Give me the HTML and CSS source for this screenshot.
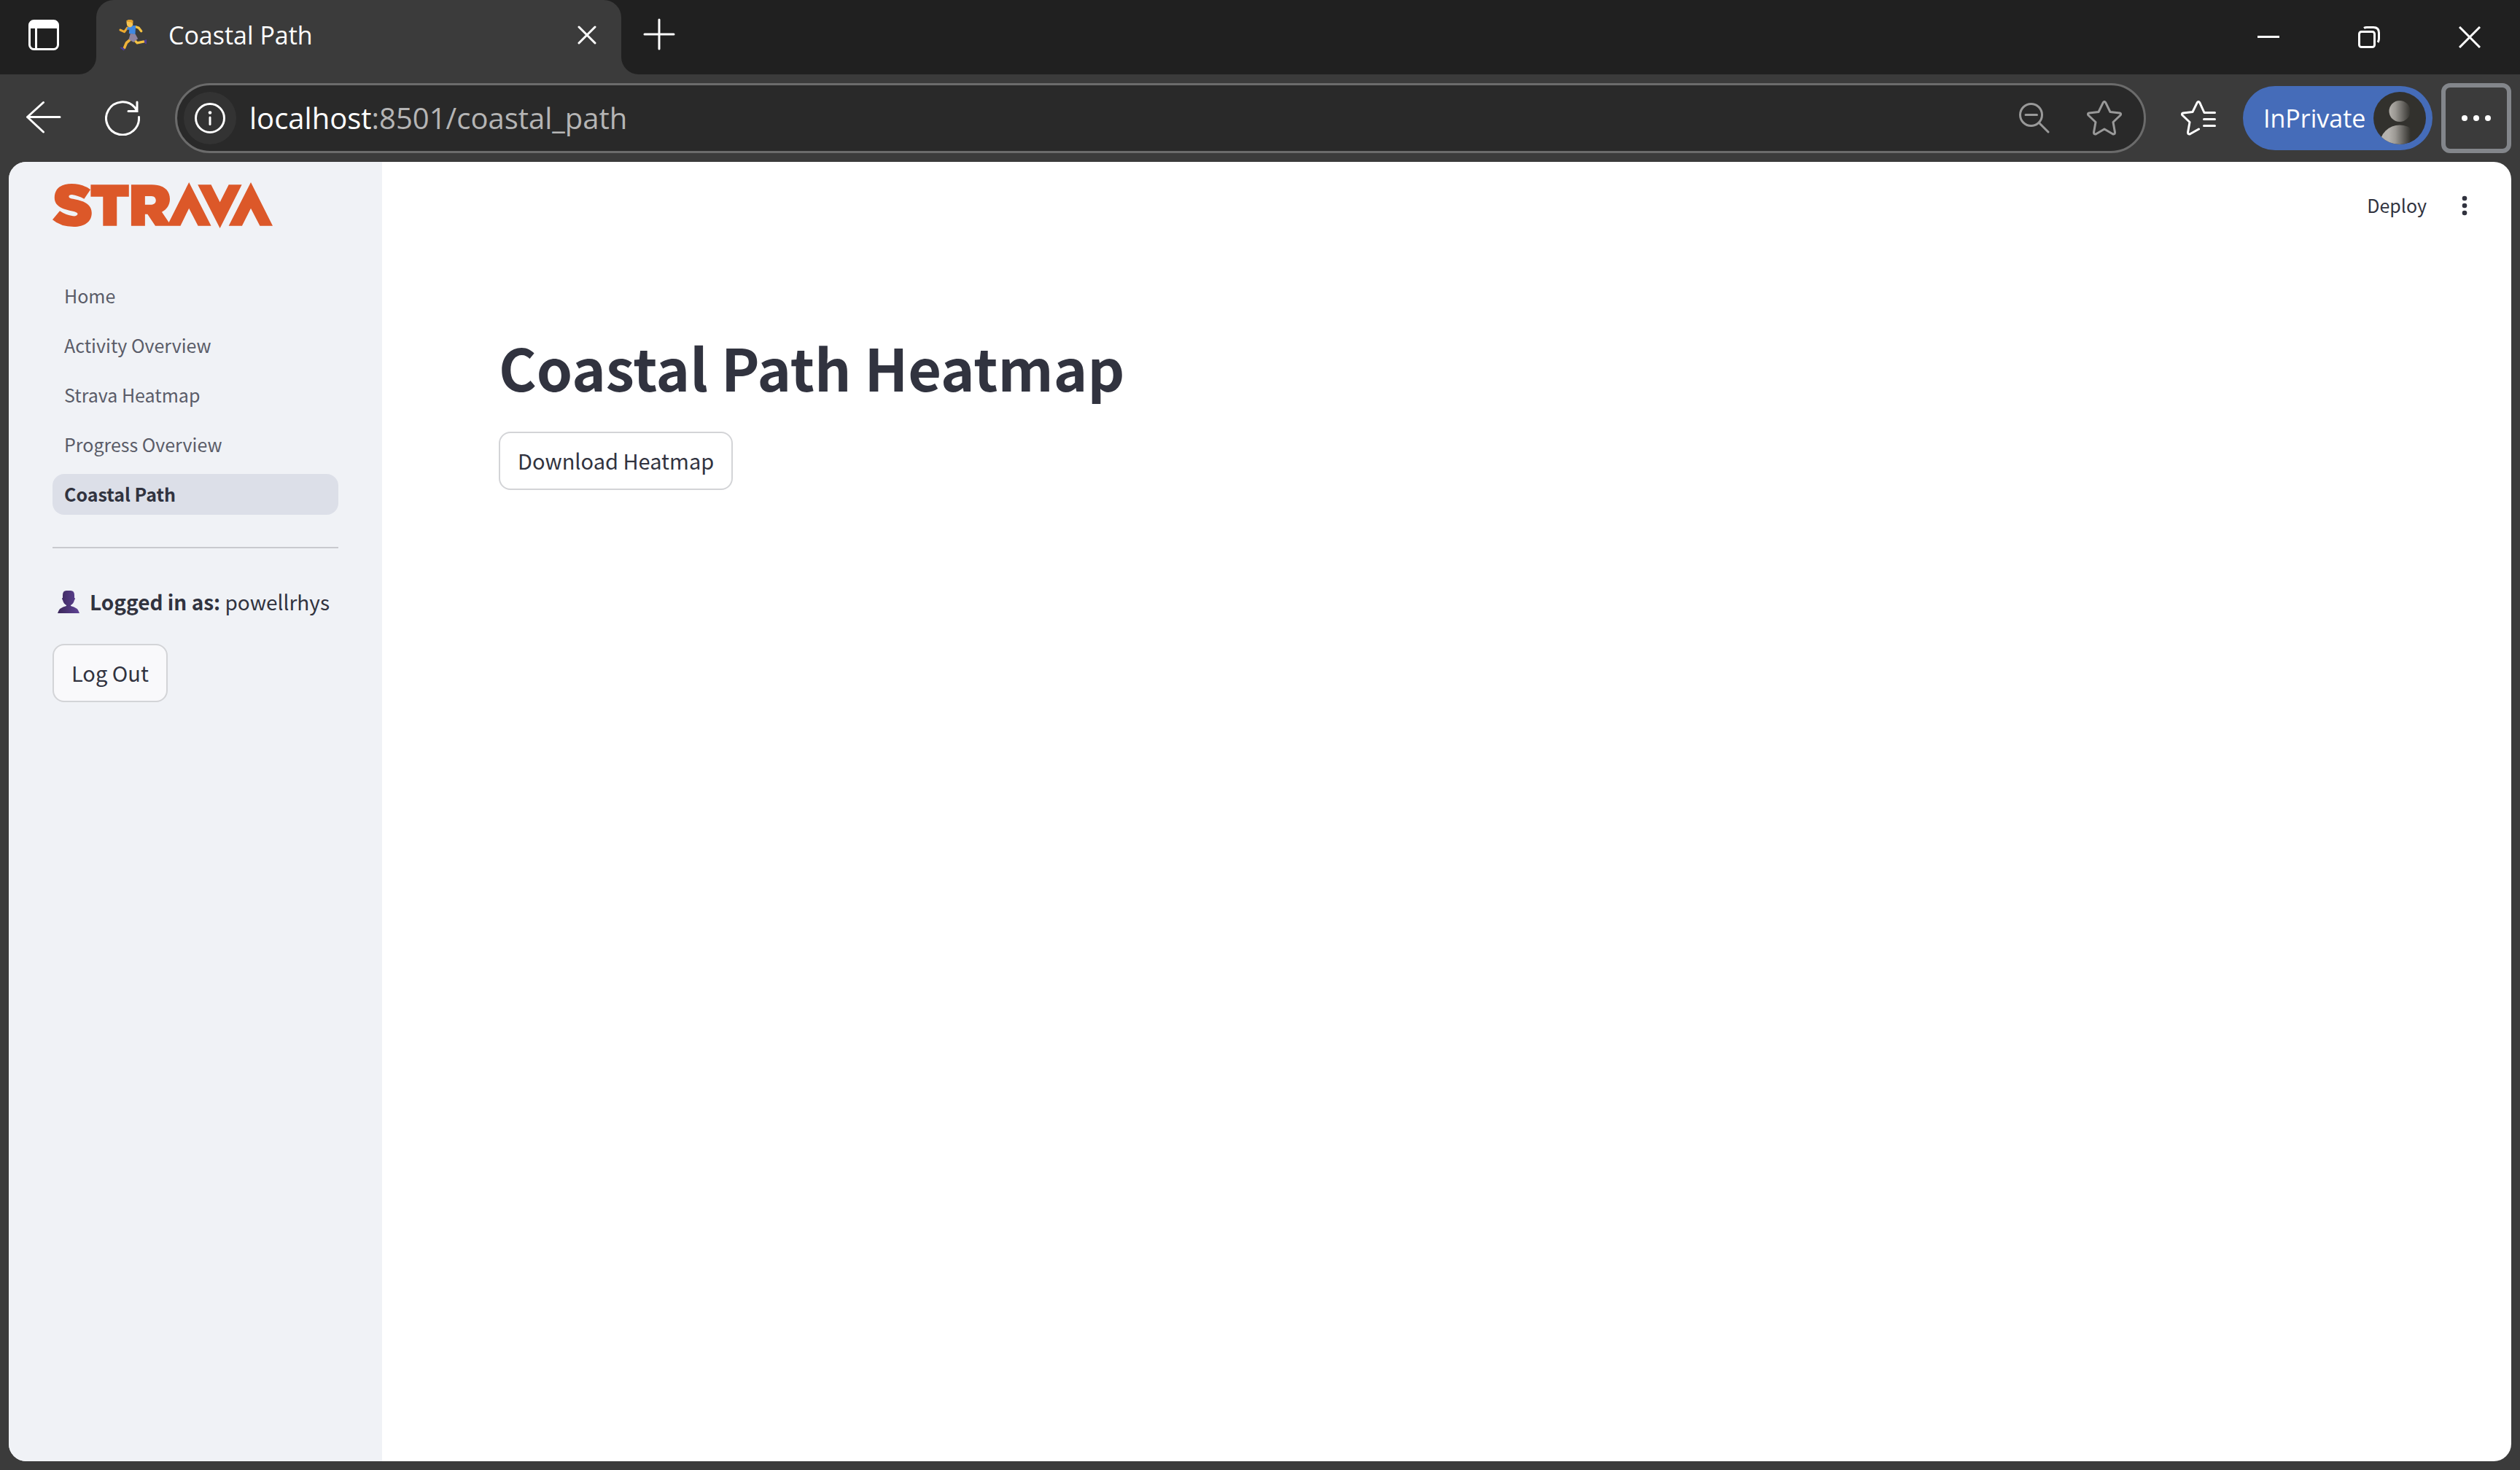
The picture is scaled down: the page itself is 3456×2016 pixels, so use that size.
FILE: index.html
```html
<!DOCTYPE html>
<html lang="en">
<head>
<meta charset="utf-8">
<title>Coastal Path</title>
<link rel="stylesheet" href="styles.css">
</head>
<body>
<header class="browser">
  <div class="tabstrip">
    <div class="strip-start">
      <button class="icon-button" aria-label="Tab actions">
        <svg width="42" height="42" viewBox="0 0 42 42"><rect x="1.5" y="1.5" width="39" height="39" rx="6" fill="none" stroke="#fff" stroke-width="3"/><path d="M1 12V7a6 6 0 0 1 6-6h28a6 6 0 0 1 6 6v5z" fill="#fff"/><path d="M10.500 12v28" stroke="#fff" stroke-width="3"/></svg>
      </button>
    </div>
    <div class="tab-slot">
      <div class="tab">
        <svg width="39" height="44" viewBox="488 76 118 132" stroke-linecap="round" stroke-linejoin="round">
          <path d="M523 112 511 129 494 121" fill="none" stroke="#eca92f" stroke-width="9"/>
          <path d="M558 108 570 112 581 126" fill="none" stroke="#f5c242" stroke-width="10"/>
          <path d="M534 162 520 174 511 195" fill="none" stroke="#f0b23a" stroke-width="11"/>
          <path d="M552 162 564 175 593 169" fill="none" stroke="#f5c242" stroke-width="10"/>
          <path d="M492 194 503 193 514 201 508 207zM592 164 603 160 603 179 597 178z" fill="#4b3c94"/>
          <path d="M524 110Q538 100 558 103L556 140 530 136 531 120 520 120z" fill="#4088e2"/>
          <path d="M536 136 557 139 567 157 549 172 529 160z" fill="#8e84a0"/>
          <path d="M520 83Q532 75 546 82L546 101Q538 114 527 108 520 103 520 92z" fill="#f6c453"/>
          <path d="M519 83Q532 74 547 82L546 96 539 89 522 87z" fill="#e3a12c"/>
        </svg>
        <span class="tab-title">Coastal Path</span>
        <button class="icon-button" aria-label="Close tab">
          <svg width="26" height="26" viewBox="0 0 26 26"><path d="M2 2 24 24M24 2 2 24" stroke="#fff" stroke-width="3" stroke-linecap="round"/></svg>
        </button>
      </div>
    </div>
    <div class="strip-end">
      <button class="icon-button" aria-label="New tab">
        <svg width="44" height="44" viewBox="0 0 44 44"><path d="M22 2V42M2 22H42" stroke="#fff" stroke-width="3" stroke-linecap="round"/></svg>
      </button>
      <div class="window-controls">
        <button class="icon-button" aria-label="Minimize"><svg width="30" height="30" viewBox="0 0 30 30"><path d="M0 14.500H30" stroke="#fff" stroke-width="3"/></svg></button>
        <button class="icon-button" aria-label="Restore"><svg width="30" height="30" viewBox="0 0 30 30" fill="none" stroke="#fff" stroke-width="3"><rect x="1.500" y="7.500" width="21" height="21" rx="3"/><path d="M8 2.500Q9.500 1.500 12 1.500H21Q28.500 1.500 28.500 9V17Q28.500 20 27 22"/></svg></button>
        <button class="icon-button" aria-label="Close"><svg width="30" height="30" viewBox="0 0 30 30"><path d="M1 1 29 29M29 1 1 29" stroke="#fff" stroke-width="3"/></svg></button>
      </div>
    </div>
  </div>
  <div class="toolbar">
    <div class="nav-buttons">
      <button class="icon-button" aria-label="Back"><svg width="48" height="48" viewBox="0 0 48 48" fill="none" stroke="#fff" stroke-width="3" stroke-linecap="round" stroke-linejoin="round"><path d="M23.500 2.500 1.500 22.500 23.500 43M2 22.500H46"/></svg></button>
      <button class="icon-button" aria-label="Refresh"><svg width="48" height="48" viewBox="0 0 48 48" fill="none" stroke="#fff" stroke-width="3" stroke-linecap="round"><path d="M46.500 22.500A22.500 22.500 0 1 1 41 9.500L44 14.500M44 2V14.500H32"/></svg></button>
    </div>
    <div class="address">
      <button class="site-info" aria-label="View site information"><svg width="42" height="42" viewBox="0 0 42 42"><circle cx="21" cy="21" r="19.500" fill="none" stroke="#fff" stroke-width="3"/><circle cx="21" cy="13.500" r="2.300" fill="#fff"/><path d="M21 20V29.500" stroke="#fff" stroke-width="3" stroke-linecap="round"/></svg></button>
      <div class="url"><span class="host">localhost</span>:8501/coastal_path</div>
      <div class="address-actions">
        <button class="icon-button" aria-label="Zoom"><svg width="42" height="42" viewBox="0 0 42 42" fill="none" stroke="#999" stroke-width="3" stroke-linecap="round"><circle cx="16.500" cy="16.500" r="15"/><path d="M9 16.500H24.500M28 28 40 40"/></svg></button>
        <button class="icon-button" aria-label="Add to favorites"><svg width="48" height="48" viewBox="0 0 48 48" fill="none" stroke="#999" stroke-width="3" stroke-linejoin="round"><path d="M22.200 2.800Q24 0 25.800 2.800L32 15.500 45 17Q48 18 45.500 20.500L36 29.500 38.500 43.500Q38.500 47 35 45.500L24 39 13 45.500Q9.500 47 9.500 43.500L12 29.500 2.500 20.500Q0 18 3 17L16 15.500Z"/></svg></button>
      </div>
    </div>
    <button class="icon-button" aria-label="Favorites"><svg width="48" height="48" viewBox="0 0 48 48" fill="none" stroke="#fff" stroke-width="3" stroke-linecap="round" stroke-linejoin="round"><path d="M46.500 16.500H32L25.800 2.800Q24 0 22.200 2.800L16 15.500 3 17Q0 18 2.500 20.500L12 29.500 9.500 43.500Q9.500 47 13 45.500L24.500 39M31.500 25.500H46.500M31.500 34.500H46.500"/></svg></button>
    <button class="profile">InPrivate
      <svg width="72" height="72" viewBox="0 0 72 72"><defs><linearGradient id="fade" gradientUnits="userSpaceOnUse" x1="21" y1="0" x2="51" y2="0"><stop offset="0" stop-color="#b5b2ad"/><stop offset=".3" stop-color="#9c9994"/><stop offset="1" stop-color="#32312d"/></linearGradient><clipPath id="round"><circle cx="36" cy="36" r="36"/></clipPath></defs><g clip-path="url(#round)"><path d="M0 0H72V72H0z" fill="#32312d"/><circle cx="36" cy="26.500" r="14.500" fill="url(#fade)"/><circle cx="36" cy="73" r="27.500" fill="url(#fade)"/></g></svg>
    </button>
    <button class="more" aria-label="Settings and more"><svg width="40" height="8" viewBox="0 0 40 8" fill="#fff"><circle cx="4" cy="4" r="4"/><circle cx="20" cy="4" r="4"/><circle cx="36" cy="4" r="4"/></svg></button>
  </div>
</header>
<div class="app">
  <aside class="sidebar">
    <svg class="logo" role="img" aria-label="Strava" width="302" height="63" viewBox="210 121 876 189" preserveAspectRatio="none" fill="#dc5829"><path d="M361 151 336 189Q310 175 288 172C273 171 271 183 282 187 305 194 366 197 366 247 366 284 337 304 295 304Q242 304 210 275L239 239Q263 256 291 260C306 262 315 252 307 246 288 235 218 236 218 185 218 145 246 127 286 127Q330 127 361 151zM362 131H514V180H466V300H411V180H362zM523 131H605C650 131 677 152 677 190 677 214 664 234 645 243L673 286 753 121 841 300H789L753 228 719 300H619L588 252H578V300H523zM578 178V213H604C627 213 627 178 604 178zM788 131H841L876 203 911 131H963L876 310zM999 121 1086 300H1035L999 228 964 300H911z"/></svg>
    <nav class="menu">
      <a href="#">Home</a>
      <a href="#">Activity Overview</a>
      <a href="#">Strava Heatmap</a>
      <a href="#">Progress Overview</a>
      <a href="#" class="active" aria-current="page">Coastal Path</a>
    </nav>
    <hr class="divider">
    <p class="user"><svg width="30" height="31" viewBox="0 0 30 31"><defs><linearGradient id="purple"><stop offset="0" stop-color="#3b2759"/><stop offset="1" stop-color="#5f4496"/></linearGradient></defs><path d="M7 10V6Q7 0 12 0H18Q23 0 23 6V10Q25 10 23 13 22 18 18 20V21Q28 23 30 31H0Q2 23 12 21V20Q8 18 7 13 5 10 7 10z" fill="url(#purple)"/></svg><span><strong>Logged in as:</strong> powellrhys</span></p>
    <button class="button">Log Out</button>
  </aside>
  <main class="main">
    <div class="app-bar">
      <button class="deploy">Deploy</button>
      <button class="icon-button" aria-label="Main menu"><svg width="8" height="28" viewBox="0 0 8 28" fill="#31333f"><circle cx="4" cy="4" r="3.300"/><circle cx="4" cy="14" r="3.300"/><circle cx="4" cy="24" r="3.300"/></svg></button>
    </div>
    <section class="content">
      <h1>Coastal Path Heatmap</h1>
      <button class="button">Download Heatmap</button>
    </section>
  </main>
</div>
</body>
</html>
```
FILE: styles.css
```css
* { box-sizing: border-box; }

body {
  margin: 0;
  min-height: 100vh;
  display: flex;
  flex-direction: column;
  background: #3b3b3b;
  color: #31333f;
  font-family: "Noto Sans CJK SC", sans-serif;
  font-size: 29px;
}

button {
  margin: 0;
  padding: 0;
  border: 0;
  background: none;
  color: inherit;
  font: inherit;
}

svg { display: block; flex: none; }

.icon-button { display: flex; align-items: center; justify-content: center; }

/* Browser frame */
.browser {
  color: #fff;
  font-family: "Open Sans", "Noto Sans", sans-serif;
}

.tabstrip { display: flex; height: 102px; }

.strip-start {
  width: 132px;
  padding: 0 0 6px 39px;
  display: flex;
  align-items: center;
  background: #202020;
  border-bottom-right-radius: 24px;
}

.tab-slot { width: 720px; background: #202020; }

.tab {
  height: 100%;
  padding: 0 34px 6px 31px;
  display: flex;
  align-items: center;
  background: #3b3b3b;
  border-radius: 24px 24px 0 0;
}

.tab-title { flex: 1; padding-left: 29px; font-size: 34px; line-height: 48px; }

.strip-end {
  flex: 1;
  padding-left: 30px;
  display: flex;
  justify-content: space-between;
  background: #202020;
  border-bottom-left-radius: 24px;
}

.strip-end > .icon-button { padding-bottom: 9px; }
.window-controls { display: flex; }
.window-controls .icon-button { width: 138px; }

.toolbar {
  height: 120px;
  padding: 12px 12px 12px 36px;
  display: flex;
  align-items: center;
}

.nav-buttons { display: flex; gap: 60px; width: 204px; }

.address {
  flex: 1;
  height: 96px;
  padding: 0 30px 0 9px;
  display: flex;
  align-items: center;
  background: #292929;
  border: 3px solid #6b6b6b;
  border-radius: 48px;
  margin-right: 48px;
}

.site-info {
  width: 72px;
  height: 72px;
  display: grid;
  place-items: center;
  border-radius: 50%;
  background: #333;
}

.url { flex: 1; padding-left: 18px; font-size: 40px; line-height: 54px; color: #b5b5b5; }
.host { color: #fff; }
.address-actions { display: flex; align-items: center; gap: 51px; }

.profile {
  width: 260px;
  height: 88px;
  margin: 0 12px 0 37px;
  padding: 0 9px 0 28px;
  display: flex;
  align-items: center;
  justify-content: space-between;
  border-radius: 44px;
  background: #456cb9;
  font-size: 34px;
}

.more {
  width: 96px;
  height: 96px;
  display: grid;
  place-items: center;
  border: 6px solid #83868b;
  border-radius: 12px;
}

/* Application */
.app {
  flex: 1;
  margin: 0 12px 12px;
  display: flex;
  overflow: hidden;
  background: #fff;
  border-radius: 24px;
}

.sidebar { width: 512px; padding: 28px 60px; background: #f0f2f6; }

.menu {
  margin-top: 65px;
  display: flex;
  flex-direction: column;
  gap: 12px;
}

.menu a {
  padding: 0 16px 2px;
  border-radius: 16px;
  color: #5a5c68;
  font-size: 25px;
  line-height: 54px;
  text-decoration: none;
}

.menu .active { background: #dcdfe8; color: #31333f; font-weight: 600; }

.divider { margin: 44px 0 48px; border: 0; border-top: 2px solid #c9cacf; }

.user {
  margin: 0 0 32px;
  padding-left: 7px;
  display: flex;
  align-items: center;
  gap: 14px;
  font-size: 28px;
  line-height: 51px;
  white-space: nowrap;
}

.user strong { font-weight: 600; }

.button {
  height: 80px;
  padding: 0 24px 2px;
  border: 2px solid #d3d4d7;
  border-radius: 16px;
  background: #fff;
}

.sidebar .button { background: #f9f9fb; }

.main { flex: 1; }

.app-bar {
  height: 120px;
  padding: 0 60px;
  display: flex;
  align-items: center;
  justify-content: flex-end;
  gap: 48px;
}

.deploy { padding-bottom: 2px; font-size: 25px; }

.content { padding: 108px 160px; }

h1 { margin: 0 0 36px; font-size: 79px; line-height: 106px; font-weight: 700; }
```
